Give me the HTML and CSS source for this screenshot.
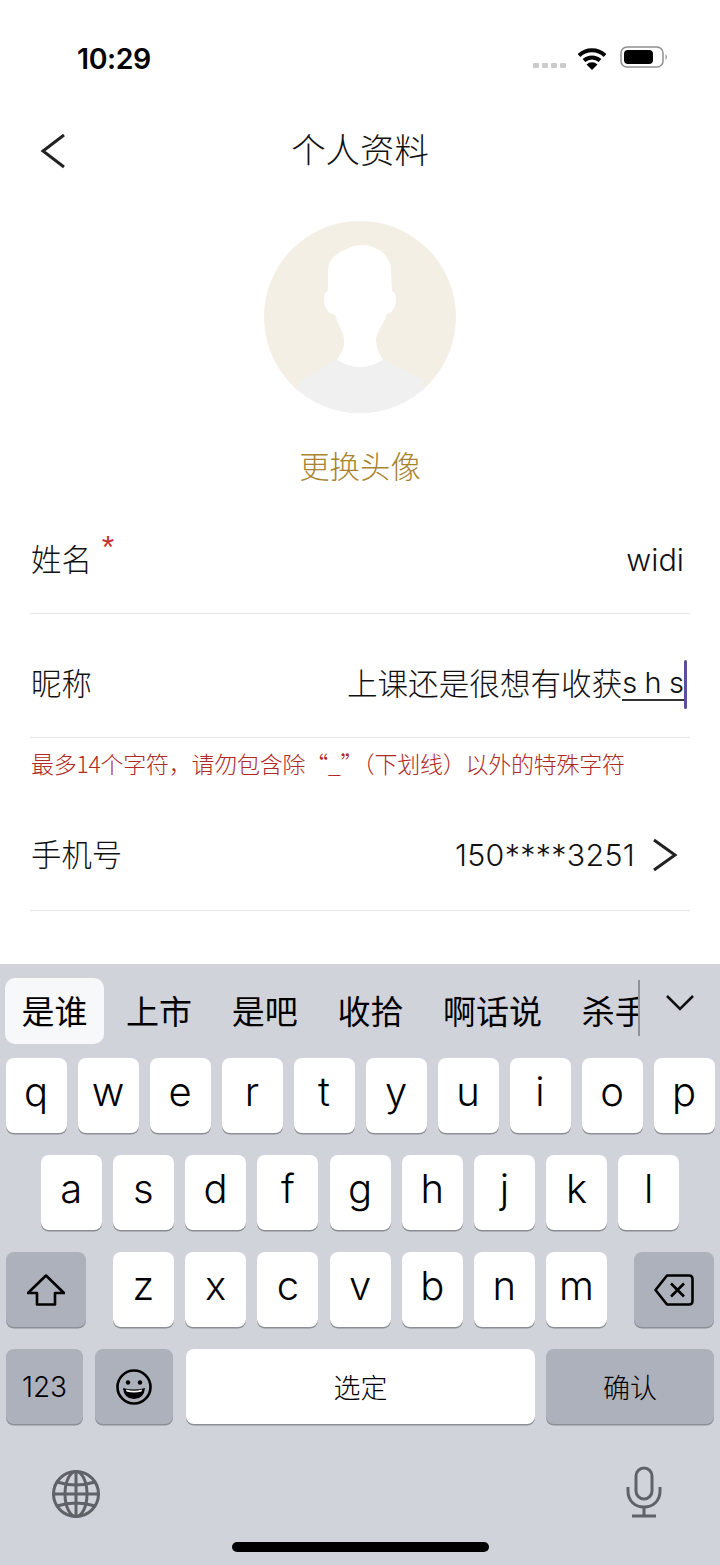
FILE: index.html
```html
<!DOCTYPE html>
<html lang="zh-CN">
<head>
<meta charset="utf-8">
<title>个人资料</title>
<link rel="stylesheet" href="styles.css">
</head>
<body>
<div class="page">
  <header class="status">
    <span class="time">10:29</span>
    <div class="status-icons">
      <span class="signal"><i></i><i></i><i></i><i></i></span>
      <svg class="wifi" width="30" height="24" viewBox="0 0 30 24"><path d="M2 8.5 A19 19 0 0 1 28 8.5" fill="none" stroke="#000" stroke-width="4"/><path d="M7 13.5 A12 12 0 0 1 23 13.5" fill="none" stroke="#000" stroke-width="4"/><path d="M15 23 L9.5 17.5 A8 8 0 0 1 20.5 17.5 Z" fill="#000"/></svg>
      <svg class="battery" width="48" height="22" viewBox="0 0 48 22"><rect x="1" y="1" width="42" height="20" rx="6" fill="none" stroke="#8e8e8e" stroke-width="1.5"/><rect x="4" y="4" width="29" height="14" rx="4" fill="#000"/><path d="M45.5 8 A4 4 0 0 1 45.5 14 Z" fill="#8e8e8e"/></svg>
    </div>
  </header>

  <nav class="nav">
    <svg class="back" width="26" height="36" viewBox="0 0 26 36"><path d="M24 2 L3 18 L24 34" fill="none" stroke="#222" stroke-width="3"/></svg>
    <h1 class="title">个人资料</h1>
  </nav>

  <section class="avatar-block">
    <svg class="avatar" width="192" height="192" viewBox="0 0 192 192">
      <defs><clipPath id="disc"><circle cx="96" cy="96" r="96"/></clipPath></defs>
      <circle cx="96" cy="96" r="96" fill="#f4efe4"/>
      <path clip-path="url(#disc)" d="M35 161 L73 138 L119 138 L158 158 L170 192 L22 192 Z" fill="#f0f0f0"/>
      <path d="M64 70 L64 52 C64 44 66 40 69 37 C73 32 78 30 83 28 C88 25 93 24 99 24 C105 24 109 26 113 28 C118 30 121 33 123 37 C126 41 127 44 127 50 L128 70 C131 71 132 75 132 78 C132 85 130 91 123 93 C120 103 113 110 112 118 C112 126 115 133 119 138 C113 143 105 146 96 146 C87 146 79 143 73 138 C77 133 81 126 80 118 C79 110 74 104 71 94 C63 92 60 85 60 78 C60 75 61 71 64 70 Z" fill="#fff"/>
    </svg>
    <p class="change">更换头像</p>
  </section>

  <div class="row row-name">
    <span class="label">姓名<sup class="req">*</sup></span>
    <span class="value">widi</span>
  </div>
  <div class="row row-nick">
    <span class="label">昵称</span>
    <span class="value">上课还是很想有收获<span class="compose">s h s</span><span class="caret"></span></span>
  </div>
  <p class="hint">最多14个字符，请勿包含除“_”（下划线）以外的特殊字符</p>
  <div class="row row-phone">
    <span class="label">手机号</span>
    <span class="value phone"><span>150****3251</span><svg class="more" width="26" height="34" viewBox="0 0 26 34"><path d="M2 2 L23 17 L2 32" fill="none" stroke="#222" stroke-width="3"/></svg></span>
  </div>

  <section class="keyboard">
    <div class="cands">
      <div class="cand-list">
        <span class="cand active">是谁</span>
        <span class="cand">上市</span>
        <span class="cand">是吧</span>
        <span class="cand">收拾</span>
        <span class="cand">啊话说</span>
        <span class="cand">杀手</span>
      </div>
      <span class="cand-rule"></span>
      <svg class="cand-more" width="30" height="20" viewBox="0 0 30 20"><path d="M2 3 L15 16 L28 3" fill="none" stroke="#111" stroke-width="2.6"/></svg>
    </div>
    <div class="keys">
      <div class="key-row">
        <span class="key">q</span><span class="key">w</span><span class="key">e</span><span class="key">r</span><span class="key">t</span><span class="key">y</span><span class="key">u</span><span class="key">i</span><span class="key">o</span><span class="key">p</span>
      </div>
      <div class="key-row row-a">
        <span class="key">a</span><span class="key">s</span><span class="key">d</span><span class="key">f</span><span class="key">g</span><span class="key">h</span><span class="key">j</span><span class="key">k</span><span class="key">l</span>
      </div>
      <div class="key-row row-z">
        <span class="key mod wide">
          <svg width="38" height="32" viewBox="0 0 38 32"><path d="M19 1.5 L37 19 L28 19 L28 30.5 L10 30.5 L10 19 L1 19 Z" fill="none" stroke="#000" stroke-width="2.6" stroke-linejoin="round"/></svg>
        </span>
        <div class="letters">
          <span class="key">z</span><span class="key">x</span><span class="key">c</span><span class="key">v</span><span class="key">b</span><span class="key">n</span><span class="key">m</span>
        </div>
        <span class="key mod wide">
          <svg width="40" height="32" viewBox="0 0 40 32"><path d="M13 1.5 L35 1.5 Q38.5 1.5 38.5 5 L38.5 27 Q38.5 30.5 35 30.5 L13 30.5 L1.5 16 Z" fill="none" stroke="#000" stroke-width="2.6" stroke-linejoin="round"/><path d="M17 9.5 L30 22.5 M30 9.5 L17 22.5" stroke="#000" stroke-width="2.6"/></svg>
        </span>
      </div>
      <div class="key-row row-bottom">
        <span class="key mod num">123</span>
        <span class="key mod emoji">
          <svg width="38" height="38" viewBox="0 0 38 38"><circle cx="19" cy="19" r="16.5" fill="none" stroke="#000" stroke-width="2.6"/><circle cx="13" cy="14.5" r="2.2"/><circle cx="25" cy="14.5" r="2.2"/><path d="M8 20 Q19 23 30 20 Q29 31 19 31 Q9 31 8 20 Z" fill="#000"/><path d="M11 21.5 Q19 24 27 21.5 L26.5 23.5 Q19 25.5 11.5 23.5 Z" fill="#fff"/></svg>
        </span>
        <span class="key space">选定</span>
        <span class="key mod confirm">确认</span>
      </div>
    </div>
    <div class="kb-bottom">
      <svg class="globe" width="50" height="50" viewBox="0 0 50 50" fill="none" stroke="#5f6266" stroke-width="3"><circle cx="25" cy="25" r="22.5"/><ellipse cx="25" cy="25" rx="11" ry="22.5"/><path d="M25 2.5 V47.5 M2.5 25 H47.5 M6 13 Q25 19 44 13 M6 37 Q25 31 44 37"/></svg>
      <svg class="mic" width="36" height="52" viewBox="0 0 36 52" fill="none" stroke="#5f6266" stroke-width="3"><rect x="10" y="2" width="16" height="31" rx="8"/><path d="M2 21 V25 C2 35 9 41 18 41 C27 41 34 35 34 25 V21 M18 41 V50 M6 50 H30"/></svg>
    </div>
    <div class="home-bar"></div>
  </section>
</div>
</body>
</html>
```

FILE: styles.css
```css
* { box-sizing: border-box; }
html, body { margin: 0; padding: 0; background: #fff; }
body {
  width: 720px;
  height: 1565px;
  overflow: hidden;
  font-family: Inter, "Noto Sans CJK SC", sans-serif;
  color: #111;
}
.page { display: flex; flex-direction: column; width: 720px; height: 1565px; }

.status {
  height: 100px;
  flex: none;
  display: flex;
  justify-content: space-between;
  align-items: flex-start;
  padding: 42px 52px 0 77px;
}
.time { font-size: 28.5px; line-height: 34px; font-weight: 600; color: #000; letter-spacing: -0.4px; }
.status-icons { display: flex; align-items: flex-start; margin-top: 4px; }
.signal { display: flex; gap: 3px; margin-top: 17px; margin-right: 11px; }
.signal i { width: 6px; height: 5px; border-radius: 1px; background: #cbcbcb; }
.wifi { margin-right: 13px; margin-top: 1px; }

.nav {
  height: 100px;
  flex: none;
  display: flex;
  align-items: center;
  justify-content: center;
  position: relative;
}
.back { position: absolute; left: 40px; top: 33px; }
.title { margin: 2px 0 0; font-size: 34.4px; font-weight: 300; color: #111; line-height: 44px; }

.avatar-block { display: flex; flex-direction: column; align-items: center; padding-top: 21px; flex: none; }
.avatar { display: block; }
.change { margin: 34px 0 0; font-size: 30.4px; line-height: 40px; color: #a9842f; font-weight: 300; }

.row {
  flex: none;
  margin: 0 30px;
  display: flex;
  justify-content: space-between;
  align-items: center;
  height: 40px;
  box-sizing: content-box;
  border-bottom: 1px solid #e6e6e6;
  font-size: 30.4px;
  line-height: 40px;
  font-weight: 300;
}
.row-name { padding-top: 53px; padding-bottom: 33px; }
.row-nick { padding-top: 50px; padding-bottom: 33px; }
.row-phone { padding-top: 57px; padding-bottom: 35px; }
.label { padding-left: 1px; position: relative; }
.req { color: #c8322d; font-size: 32px; line-height: 0; vertical-align: 13px; margin-left: 10px; font-family: "Liberation Sans", sans-serif; font-weight: 400; }
.value { padding-right: 6px; display: flex; align-items: center; font-size: 30.6px; white-space: nowrap; }
.compose { border-bottom: 2px solid #333; font-size: 29px; line-height: 34px; height: 35px; word-spacing: -0.8px; white-space: pre; margin-top: -1px; }
.caret { width: 3px; height: 49px; background: #5b4f9e; border-radius: 2px; margin-right: -3px; }
.phone { padding-right: 12px; font-size: 30.4px; letter-spacing: 0.3px; }
.more { margin-left: 17px; }
.hint { flex: none; margin: 10px 0 0 31px; font-family: "Noto Sans CJK SC", sans-serif; font-size: 23px; letter-spacing: -0.25px; line-height: 30px; color: #b02a25; white-space: nowrap; font-weight: 300; }

.keyboard {
  margin-top: auto;
  height: 601px;
  flex: none;
  background: #d1d3da;
  display: flex;
  flex-direction: column;
}
.cands { height: 94px; flex: none; display: flex; align-items: flex-start; padding: 14px 0 0 5px; }
.cand-list {
  width: 633px;
  height: 66px;
  overflow: hidden;
  display: flex;
  gap: 22px;
  align-items: center;
  white-space: nowrap;
}
.cand-rule { width: 2px; height: 56px; margin-top: 2px; background: #8f9299; flex: none; }
.cand { font-size: 33px; line-height: 68px; height: 66px; color: #000; flex: none; }
.cand + .cand { margin-left: 17.7px; }
.cand:nth-child(2) { margin-left: 0; }
.cand.active { width: 99px; text-align: center; background: #f7f8f9; border-radius: 10px; }
.cand-more { margin: 15px 0 0 25px; }

.keys { display: flex; flex-direction: column; gap: 21px; padding: 0 5.5px; flex: none; }
.key-row { display: flex; justify-content: space-between; height: 76px; }
.row-a { justify-content: center; gap: 11.2px; }
.row-z { padding: 0 0.5px; }
.letters { display: flex; gap: 11.2px; }
.key {
  width: 61px;
  height: 75px;
  flex: none;
  background: #fff;
  border-radius: 8px;
  box-shadow: 0 1.5px 0 #8b8e94;
  display: flex;
  align-items: center;
  justify-content: center;
  padding-bottom: 7px;
  font-size: 40px;
  font-weight: 300;
  line-height: 1;
  color: #000;
}
.mod { background: #adb1bb; padding-bottom: 0; }
.wide { width: 80px; }
.num { width: 77px; margin-left: 0.5px; font-size: 28px; font-weight: 300; }
.emoji { width: 78px; margin-left: 12px; }
.space { width: 349px; margin-left: 13px; font-size: 27px; font-weight: 300; padding: 4px 0 0; }
.confirm { width: 168px; margin-left: 11px; font-size: 27px; font-weight: 300; padding: 4px 0 0; }
.row-bottom { justify-content: flex-start; }

.kb-bottom { flex: none; display: flex; justify-content: space-between; align-items: flex-start; height: 52px; margin-top: 41px; padding: 0 58px 0 51px; }
.globe { margin-top: 3px; }
.home-bar { width: 257px; height: 10px; margin: 24px auto 0; background: #000; border-radius: 5px; flex: none; }
```
